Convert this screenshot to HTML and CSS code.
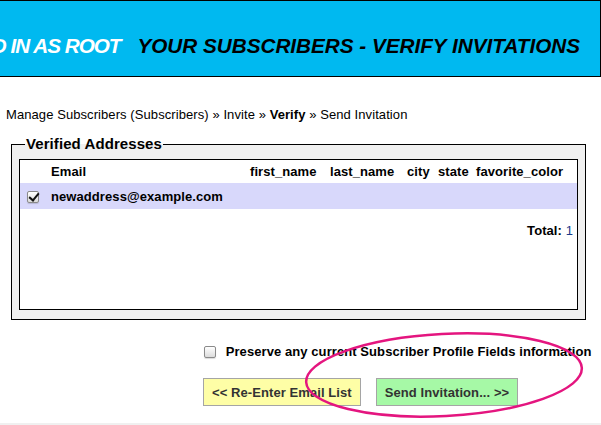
FILE: index.html
```html
<!DOCTYPE html>
<html lang="en">
<head>
    <meta charset="UTF-8">
    <title>Your Subscribers - Verify Invitations</title>
    <link rel="stylesheet" href="styles.css">
</head>
<body>
    <header class="banner">
        <span class="login">YOU ARE LOGGED IN AS ROOT</span>
        <span class="page-title">YOUR SUBSCRIBERS - VERIFY INVITATIONS</span>
    </header>

    <div class="crumbs">
        Manage Subscribers (Subscribers) &raquo; Invite &raquo; <b>Verify</b> &raquo; Send Invitation
    </div>

    <form class="invite-form">
        <fieldset class="verified">
            <legend>Verified Addresses</legend>
            <div class="list-box">
                <table class="addr">
                    <thead>
                        <tr>
                            <th></th>
                            <th>Email</th>
                            <th>first_name</th>
                            <th>last_name</th>
                            <th>city</th>
                            <th>state</th>
                            <th>favorite_color</th>
                        </tr>
                    </thead>
                    <tbody>
                        <tr class="row-on">
                            <td><input type="checkbox" class="cb" checked></td>
                            <td class="email">newaddress@example.com</td>
                            <td></td>
                            <td></td>
                            <td></td>
                            <td></td>
                            <td></td>
                        </tr>
                    </tbody>
                    <tfoot>
                        <tr>
                            <td colspan="7" class="total"><b>Total:</b> <span class="count">1</span></td>
                        </tr>
                    </tfoot>
                </table>
            </div>
        </fieldset>

        <div class="options">
            <label><input type="checkbox" class="cb"> Preserve any current Subscriber Profile Fields information</label>
        </div>

        <div class="actions">
            <button type="button" class="btn btn-back">&lt;&lt; Re-Enter Email List</button>
            <button type="button" class="btn btn-send">Send Invitation... &gt;&gt;</button>
        </div>
    </form>

    <div class="footer-band"></div>

    <!-- annotation drawn over the page -->
    <svg class="mark" width="601" height="425" viewBox="0 0 601 425">
        <ellipse cx="444" cy="375" rx="138" ry="41" transform="rotate(-3 444 375)" fill="none" stroke="#e4157f" stroke-width="2.5"/>
    </svg>
</body>
</html>
```

FILE: styles.css
```css
body {
    margin: 0;
    width: 601px;
    font-family: "Liberation Sans", Arial, sans-serif;
    font-size: 13px;
    letter-spacing: 0.08px;
    color: #000;
    background-color: #fff;
    position: relative;
    overflow: hidden;
}
.banner {
    box-sizing: border-box;
    width: 601px;
    height: 77px;
    padding: 33px 20px 0 0;
    background-color: #00b9f0;
    border: 1px solid #000;
    border-left: none;
    display: flex;
    justify-content: flex-end;
    white-space: nowrap;
    overflow: hidden;
    font-size: 20.7px;
    line-height: 24px;
    letter-spacing: 0;
    font-weight: bold;
    font-style: italic;
}
.login {
    color: #fff;
    margin-right: 17px;
    letter-spacing: -1px;
}
.page-title {
    color: #000;
}
.crumbs {
    margin-top: 30px;
    padding-left: 6px;
    line-height: 16px;
}
.verified {
    box-sizing: border-box;
    width: 575px;
    margin: 12px 0 0 11px;
    padding: 6px 7px 9px 7px;
    border: 1px solid #000;
    background-color: #f0f0f0;
}
.verified legend {
    font-size: 15px;
    font-weight: bold;
    line-height: 18px;
    padding: 0 1px;
    margin-left: 6px;
}
.list-box {
    height: 149px;
    background-color: #fff;
    border: 1px solid #000;
}
.addr {
    width: 100%;
    table-layout: fixed;
    border-collapse: collapse;
    white-space: nowrap;
}
.addr th, .addr td {
    padding: 0 0 0 4px;
    text-align: left;
    font-size: 13px;
    overflow: visible;
}
.addr th {
    height: 23px;
    font-weight: bold;
}
.addr th:nth-child(1) { width: 23px; }
.addr th:nth-child(2) { width: 195px; }
.addr th:nth-child(3) { width: 76px; }
.addr th:nth-child(4) { width: 73px; }
.addr th:nth-child(5) { width: 27px; }
.addr th:nth-child(6) { width: 34px; }
.row-on td {
    height: 26px;
    background-color: #d8d8fb;
}
.email {
    font-weight: bold;
}
.total {
    text-align: right !important;
    padding: 14px 4px 0 0 !important;
    line-height: 16px;
}
.count {
    color: #1a3a8a;
}
.cb {
    appearance: none;
    -webkit-appearance: none;
    box-sizing: border-box;
    width: 12px;
    height: 12px;
    margin: 0 0 0 3px;
    vertical-align: middle;
    position: relative;
    border: 1px solid #8a8a8a;
    border-radius: 2px;
    background: linear-gradient(#ffffff, #dcdcdc);
    box-shadow: 0 1px 1px rgba(0,0,0,0.15);
}
.cb:checked::after {
    content: "";
    position: absolute;
    left: 3px;
    top: -1px;
    width: 4px;
    height: 8px;
    border: solid #111;
    border-width: 0 2px 2px 0;
    transform: rotate(40deg);
}
.options {
    margin-top: 24px;
    padding-left: 201px;
    line-height: 16px;
    font-weight: bold;
}
.options .cb {
    margin: 0 6px 2px 3px;
}
.actions {
    margin-top: 18px;
    padding-left: 203px;
    display: flex;
    gap: 15px;
}
.btn {
    height: 28px;
    padding: 0 8px;
    font-family: "Liberation Sans", Arial, sans-serif;
    font-size: 13px;
    font-weight: bold;
    letter-spacing: 0.08px;
    color: #333;
    border: 1px solid #a5a5a5;
    border-radius: 0;
    cursor: pointer;
}
.btn-back {
    background-color: #fefea6;
}
.btn-send {
    background-color: #a6f9a6;
}
.footer-band {
    margin-top: 17px;
    height: 20px;
    background-color: #f0f0f0;
}
.mark {
    position: absolute;
    left: 0;
    top: 0;
    pointer-events: none;
}
```
